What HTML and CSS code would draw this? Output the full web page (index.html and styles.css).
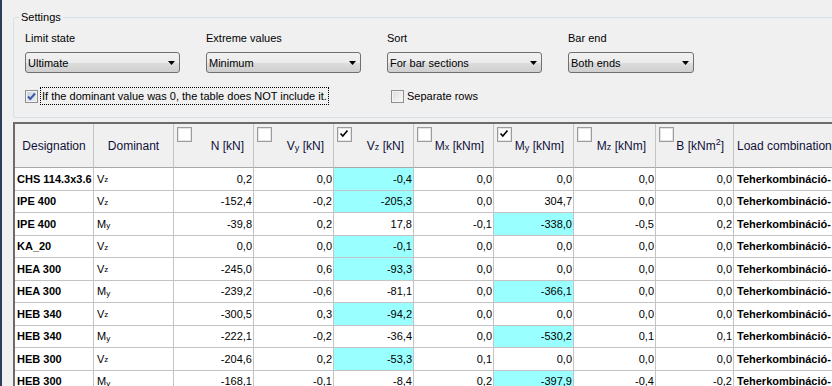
FILE: index.html
```html
<!DOCTYPE html>
<html>
<head>
<meta charset="utf-8">
<link rel="stylesheet" href="styles.css">
</head>
<body>
<div class="window">
  <div class="edge"></div>
  <div class="main">
    <div class="group">
      <span class="legend">Settings</span>
      <div class="fields">
        <div class="field">
          <div class="lbl">Limit state</div>
          <div class="combo"><span>Ultimate</span><svg class="arrow" width="7" height="4" viewBox="0 0 7 4"><polygon points="0,0 7,0 3.5,4" fill="#000"/></svg></div>
        </div>
        <div class="field">
          <div class="lbl">Extreme values</div>
          <div class="combo"><span>Minimum</span><svg class="arrow" width="7" height="4" viewBox="0 0 7 4"><polygon points="0,0 7,0 3.5,4" fill="#000"/></svg></div>
        </div>
        <div class="field">
          <div class="lbl">Sort</div>
          <div class="combo"><span>For bar sections</span><svg class="arrow" width="7" height="4" viewBox="0 0 7 4"><polygon points="0,0 7,0 3.5,4" fill="#000"/></svg></div>
        </div>
        <div class="field">
          <div class="lbl">Bar end</div>
          <div class="combo short"><span>Both ends</span><svg class="arrow" width="7" height="4" viewBox="0 0 7 4"><polygon points="0,0 7,0 3.5,4" fill="#000"/></svg></div>
        </div>
      </div>
      <div class="checks">
        <div class="check wide">
          <span class="box on"><svg width="11" height="11" viewBox="0 0 11 11"><path d="M2 5.5 L4.3 8 L9 2.5" fill="none" stroke="#3f58a3" stroke-width="2"/></svg></span>
          <span class="ctext focus">If the dominant value was 0, the table does NOT include it.</span>
        </div>
        <div class="check sep">
          <span class="box"></span>
          <span class="ctext">Separate rows</span>
        </div>
      </div>
    </div>

    <div class="gridwrap">
      <div class="grid">
        <div class="th center">Designation</div>
        <div class="th center">Dominant</div>
        <div class="th"><span class="hbox"></span>N [kN]</div>
        <div class="th"><span class="hbox"></span>V<span class="sub y">y</span>&nbsp;[kN]</div>
        <div class="th"><span class="hbox"><svg width="13" height="13" viewBox="0 0 13 13"><path d="M2.5 5.5 L4.8 8 L9.5 2.5" fill="none" stroke="#000" stroke-width="1.6"/></svg></span>V<span class="sub">z</span>&nbsp;[kN]</div>
        <div class="th"><span class="hbox"></span>M<span class="sub">x</span>&nbsp;[kNm]</div>
        <div class="th"><span class="hbox"><svg width="13" height="13" viewBox="0 0 13 13"><path d="M2.5 5.5 L4.8 8 L9.5 2.5" fill="none" stroke="#000" stroke-width="1.6"/></svg></span>M<span class="sub y">y</span>&nbsp;[kNm]</div>
        <div class="th"><span class="hbox"></span>M<span class="sub">z</span>&nbsp;[kNm]</div>
        <div class="th"><span class="hbox"></span>B [kNm<span class="sup">2</span>]</div>
        <div class="th left">Load combination</div>

        <div class="td name">CHS 114.3x3.6</div><div class="td dom">V<span class="sub">z</span></div><div class="td">0,2</div><div class="td">0,0</div><div class="td hl">-0,4</div><div class="td">0,0</div><div class="td">0,0</div><div class="td">0,0</div><div class="td">0,0</div><div class="td lc">Teherkombináció-</div>

        <div class="td name">IPE 400</div><div class="td dom">V<span class="sub">z</span></div><div class="td">-152,4</div><div class="td">-0,2</div><div class="td hl">-205,3</div><div class="td">0,0</div><div class="td">304,7</div><div class="td">0,0</div><div class="td">0,0</div><div class="td lc">Teherkombináció-</div>

        <div class="td name">IPE 400</div><div class="td dom">M<span class="sub y">y</span></div><div class="td">-39,8</div><div class="td">0,2</div><div class="td">17,8</div><div class="td">-0,1</div><div class="td hl">-338,0</div><div class="td">-0,5</div><div class="td">0,2</div><div class="td lc">Teherkombináció-</div>

        <div class="td name">KA_20</div><div class="td dom">V<span class="sub">z</span></div><div class="td">0,0</div><div class="td">0,0</div><div class="td hl">-0,1</div><div class="td">0,0</div><div class="td">0,0</div><div class="td">0,0</div><div class="td">0,0</div><div class="td lc">Teherkombináció-</div>

        <div class="td name">HEA 300</div><div class="td dom">V<span class="sub">z</span></div><div class="td">-245,0</div><div class="td">0,6</div><div class="td hl">-93,3</div><div class="td">0,0</div><div class="td">0,0</div><div class="td">0,0</div><div class="td">0,0</div><div class="td lc">Teherkombináció-</div>

        <div class="td name">HEA 300</div><div class="td dom">M<span class="sub y">y</span></div><div class="td">-239,2</div><div class="td">-0,6</div><div class="td">-81,1</div><div class="td">0,0</div><div class="td hl">-366,1</div><div class="td">0,0</div><div class="td">0,0</div><div class="td lc">Teherkombináció-</div>

        <div class="td name">HEB 340</div><div class="td dom">V<span class="sub">z</span></div><div class="td">-300,5</div><div class="td">0,3</div><div class="td hl">-94,2</div><div class="td">0,0</div><div class="td">0,0</div><div class="td">0,0</div><div class="td">0,0</div><div class="td lc">Teherkombináció-</div>

        <div class="td name">HEB 340</div><div class="td dom">M<span class="sub y">y</span></div><div class="td">-222,1</div><div class="td">-0,2</div><div class="td">-36,4</div><div class="td">0,0</div><div class="td hl">-530,2</div><div class="td">0,1</div><div class="td">0,1</div><div class="td lc">Teherkombináció-</div>

        <div class="td name">HEB 300</div><div class="td dom">V<span class="sub">z</span></div><div class="td">-204,6</div><div class="td">0,2</div><div class="td hl">-53,3</div><div class="td">0,1</div><div class="td">0,0</div><div class="td">0,0</div><div class="td">0,0</div><div class="td lc">Teherkombináció-</div>

        <div class="td name">HEB 300</div><div class="td dom">M<span class="sub y">y</span></div><div class="td">-168,1</div><div class="td">-0,1</div><div class="td">-8,4</div><div class="td">0,2</div><div class="td hl">-397,9</div><div class="td">-0,4</div><div class="td">-0,2</div><div class="td lc">Teherkombináció-</div>
      </div>
    </div>
  </div>
</div>
</body>
</html>
```

FILE: styles.css
```css
* { box-sizing: border-box; }

html, body {
  margin: 0;
  padding: 0;
  width: 832px;
  height: 386px;
  overflow: hidden;
  background: #f0f0f0;
  font-family: "Liberation Sans", Arial, sans-serif;
  font-size: 11px;
  color: #000;
}

.window {
  display: flex;
  height: 386px;
}

.edge {
  width: 2px;
  flex: none;
  background: #2b3b58;
}

.main {
  flex: 1;
  min-width: 0;
  overflow: hidden;
  padding-left: 11px;
}

/* ---------- Settings group ---------- */
.group {
  position: relative;
  margin-top: 17px;
  margin-right: -20px;
  border: 1px solid #d5dfe5;
  border-radius: 3px;
  padding: 14px 0 12px 11px;
}

.legend {
  position: absolute;
  top: -7px;
  left: 5px;
  padding: 0 2px;
  line-height: 13px;
  background: #f0f0f0;
}

.fields {
  display: grid;
  grid-template-columns: repeat(4, 181px);
}

.lbl {
  line-height: 13px;
  height: 13px;
}

.combo {
  margin-top: 7px;
  width: 155px;
  height: 21px;
  border: 1px solid #707070;
  border-radius: 3px;
  background: linear-gradient(#f2f2f2 0%, #ebebeb 50%, #dddddd 50%, #cfcfcf 100%);
  display: flex;
  align-items: center;
  justify-content: space-between;
  padding: 0 4px 0 2px;
}

.combo.short { width: 126px; }

.arrow { display: block; margin-top: 1px; }

.checks {
  margin-top: 14px;
  display: grid;
  grid-template-columns: repeat(4, 181px);
  height: 18px;
}

.check {
  display: flex;
  align-items: center;
}

.check.wide { grid-column: span 2; }
.check.sep { margin-left: 4px; }

.box {
  width: 13px;
  height: 13px;
  flex: none;
  border: 1px solid #8e8f8f;
  background: linear-gradient(135deg, #dcdcdc, #fbfbfb);
  box-shadow: inset 0 0 0 1px #f4f4f4;
  display: flex;
  align-items: center;
  justify-content: center;
}

.box.on {
  background: linear-gradient(135deg, #c9d2e0, #e9edf3);
}

.box svg { display: block; }

.ctext {
  margin-left: 3px;
  line-height: 16px;
}

.ctext.focus {
  margin-left: 2px;
  border: 1px dotted #000;
  padding: 0 1px 0 1px;
}

/* ---------- Grid ---------- */
.gridwrap {
  margin-top: 4px;
  margin-right: -200px;
  border: 2px solid #6c6c6c;
  border-right: none;
  border-bottom: none;
  height: 300px;
  background: #fff;
}

.grid {
  display: grid;
  grid-template-columns: 79px 80px 80px 80px 80px 80px 80px 82px 78px 200px;
  grid-template-rows: 44px;
  grid-auto-rows: 22.5px;
}

.th, .td {
  border-right: 1px solid #c4c4c4;
  border-bottom: 1px solid #c4c4c4;
  display: flex;
  align-items: center;
  justify-content: flex-end;
  white-space: nowrap;
  overflow: hidden;
}

.th {
  position: relative;
  background: #f0f0f0;
  font-size: 12px;
  padding-right: 9px;
  border-bottom-color: #a8a8a8;
  color: #10103a;
}

.th.center { justify-content: center; padding-right: 0; }
.th.left { justify-content: flex-start; padding-left: 3px; }

.hbox {
  position: absolute;
  top: 3px;
  left: 3px;
  width: 15px;
  height: 15px;
  border: 1px solid #9c9c9c;
  background: #fff;
  box-shadow: inset 0 0 0 1px #e4e4e4;
}

.hbox svg { display: block; }

.td {
  background: #fff;
  padding-right: 1px;
}

.td.name {
  justify-content: flex-start;
  padding-left: 2px;
  font-weight: bold;
}

.td.dom {
  justify-content: flex-start;
  padding-left: 3px;
}

.td.lc {
  justify-content: flex-start;
  padding-left: 3px;
  font-weight: bold;
}

.td.hl { background: #99ffff; }

.sub {
  font-size: 8px;
  position: relative;
  top: 1px;
}

.sub.y { top: 2px; }

.th .sub { font-size: 9px; }

.sup {
  font-size: 9px;
  position: relative;
  top: -4px;
}
```
